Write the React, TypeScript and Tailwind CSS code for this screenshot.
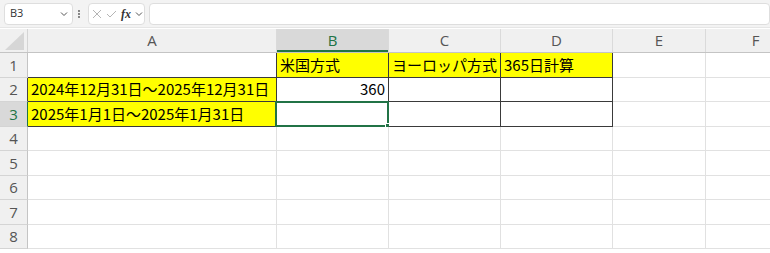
import React from "react";

const jp = { fontFamily: '"Noto Sans CJK JP", "Noto Sans", sans-serif' };
const ui = { fontFamily: '"Open Sans", "Noto Sans", sans-serif' };

const cols = ["A", "B", "C", "D", "E", "F"];
const colClass = "grid grid-cols-[28px_249px_112px_112px_112px_93px_100px]";

type Cell = { text?: string; yellow?: boolean; right?: boolean; border?: boolean; selected?: boolean };

const rows: { h: string; cells: Cell[] }[] = [
    { h: "h-[25px]", cells: [{}, { text: "米国方式", yellow: true, border: true }, { text: "ヨーロッパ方式", yellow: true, border: true }, { text: "365日計算", yellow: true, border: true }, {}, {}] },
    { h: "h-[24px]", cells: [{ text: "2024年12月31日～2025年12月31日", yellow: true, border: true }, { text: "360", right: true, border: true }, { border: true }, { border: true }, {}, {}] },
    { h: "h-[25px]", cells: [{ text: "2025年1月1日～2025年1月31日", yellow: true, border: true }, { border: true, selected: true }, { border: true }, { border: true }, {}, {}] },
    { h: "h-[24px]", cells: [{}, {}, {}, {}, {}, {}] },
    { h: "h-[25px]", cells: [{}, {}, {}, {}, {}, {}] },
    { h: "h-[24px]", cells: [{}, {}, {}, {}, {}, {}] },
    { h: "h-[25px]", cells: [{}, {}, {}, {}, {}, {}] },
    { h: "h-[24px]", cells: [{}, {}, {}, {}, {}, {}] },
];

function Chevron() {
    return (
        <svg width="8" height="6" viewBox="0 0 8 6">
            <path d="M1 1.5 L4 4.5 L7 1.5" fill="none" stroke="#555" strokeWidth="1" />
        </svg>
    );
}

export default function App() {
    return (
        <div className="w-[770px] h-[253px] overflow-hidden bg-white" style={ui}>
            {/* Formula bar */}
            <div className="h-[28px] bg-[#f3f3f3] flex items-center pl-[4px] border-b border-[#e6e6e6]">
                <div className="w-[69px] h-[22px] bg-white border border-[#dedede] rounded-[4px] flex items-center justify-between pl-[5px] pr-[4px]">
                    <span className="text-[11px] text-[#333]">B3</span>
                    <Chevron />
                </div>
                <svg width="10" height="14" viewBox="0 0 10 14" className="ml-[1px] mr-[4px]">
                    <circle cx="5" cy="4" r="0.9" fill="#555" />
                    <circle cx="5" cy="7" r="0.9" fill="#555" />
                    <circle cx="5" cy="10" r="0.9" fill="#555" />
                </svg>
                <div className="w-[57px] h-[22px] bg-white border border-[#dedede] rounded-[4px] flex items-center pl-[3px] gap-[4px]">
                    <svg width="10" height="10" viewBox="0 0 10 10">
                        <path d="M1 1 L9 9 M9 1 L1 9" stroke="#b5b5b5" strokeWidth="1" />
                    </svg>
                    <svg width="11" height="10" viewBox="0 0 11 10">
                        <path d="M1 5 L4 8 L10 2" fill="none" stroke="#b5b5b5" strokeWidth="1" />
                    </svg>
                    <span className="text-[12px] italic font-bold text-[#333] leading-none" style={{ fontFamily: '"Liberation Serif", serif' }}>fx</span>
                    <Chevron />
                </div>
                <div className="flex-1 ml-[4px] h-[22px] bg-white border border-[#dedede] rounded-[4px]" />
            </div>

            {/* Column headers */}
            <div className={`${colClass} h-[24px] mt-px bg-[#f0f0f0] border-b border-[#c4c4c4]`}>
                <div className="border-r border-[#d4d4d4] flex items-end justify-end pr-[3px] pb-[2px]">
                    <svg width="19" height="18" viewBox="0 0 19 18">
                        <path d="M19 0 L19 18 L0 18 Z" fill="#d6d6d6" />
                    </svg>
                </div>
                {cols.map((c) => (
                    <div
                        key={c}
                        className={`flex items-center justify-center text-[15px] border-r border-[#dadada] ${c === "B" ? "bg-[#d9d9d9] text-[#217346] shadow-[inset_0_-2px_0_#217346]" : "text-[#555]"}`}
                    >
                        {c}
                    </div>
                ))}
            </div>

            {/* Rows */}
            {rows.map((r, i) => (
                <div key={i} className={`${colClass} ${r.h}`}>
                    <div
                        className={`flex items-center justify-center text-[15px] border-b border-[#d4d4d4] border-r ${i === 2 ? "bg-[#d9d9d9] text-[#217346] border-r-[#217346]" : "bg-[#f0f0f0] text-[#555]"} ${i === 1 ? "border-r-[#444]" : ""} ${i > 2 || i === 0 ? "border-r-[#c4c4c4]" : ""}`}
                    >
                        {i + 1}
                    </div>
                    {r.cells.map((cell, j) => {
                        const nextBordered = r.cells[j + 1]?.border;
                        const belowBordered = rows[i + 1]?.cells[j]?.border;
                        const rightDark = cell.border || nextBordered;
                        const bottomDark = cell.border || belowBordered;
                        return (
                            <div
                                key={j}
                                className={`relative flex items-center px-[3px] text-[15px] text-black whitespace-nowrap border-r border-b ${rightDark ? "border-r-[#3a3a3a]" : "border-r-[#e1e1e1]"} ${bottomDark ? "border-b-[#3a3a3a]" : "border-b-[#e1e1e1]"} ${cell.yellow ? "bg-[#ffff00]" : "bg-white"} ${cell.right ? "justify-end" : ""}`}
                                style={jp}
                            >
                                {cell.text}
                                {cell.selected && (
                                    <span className="absolute -left-[2px] -top-[1px] -right-[1px] -bottom-[1px] border-2 border-[#217346] pointer-events-none">
                                        <span className="absolute -right-[4px] -bottom-[4px] w-[6px] h-[6px] bg-[#217346] border border-white" />
                                    </span>
                                )}
                            </div>
                        );
                    })}
                </div>
            ))}
        </div>
    );
}
